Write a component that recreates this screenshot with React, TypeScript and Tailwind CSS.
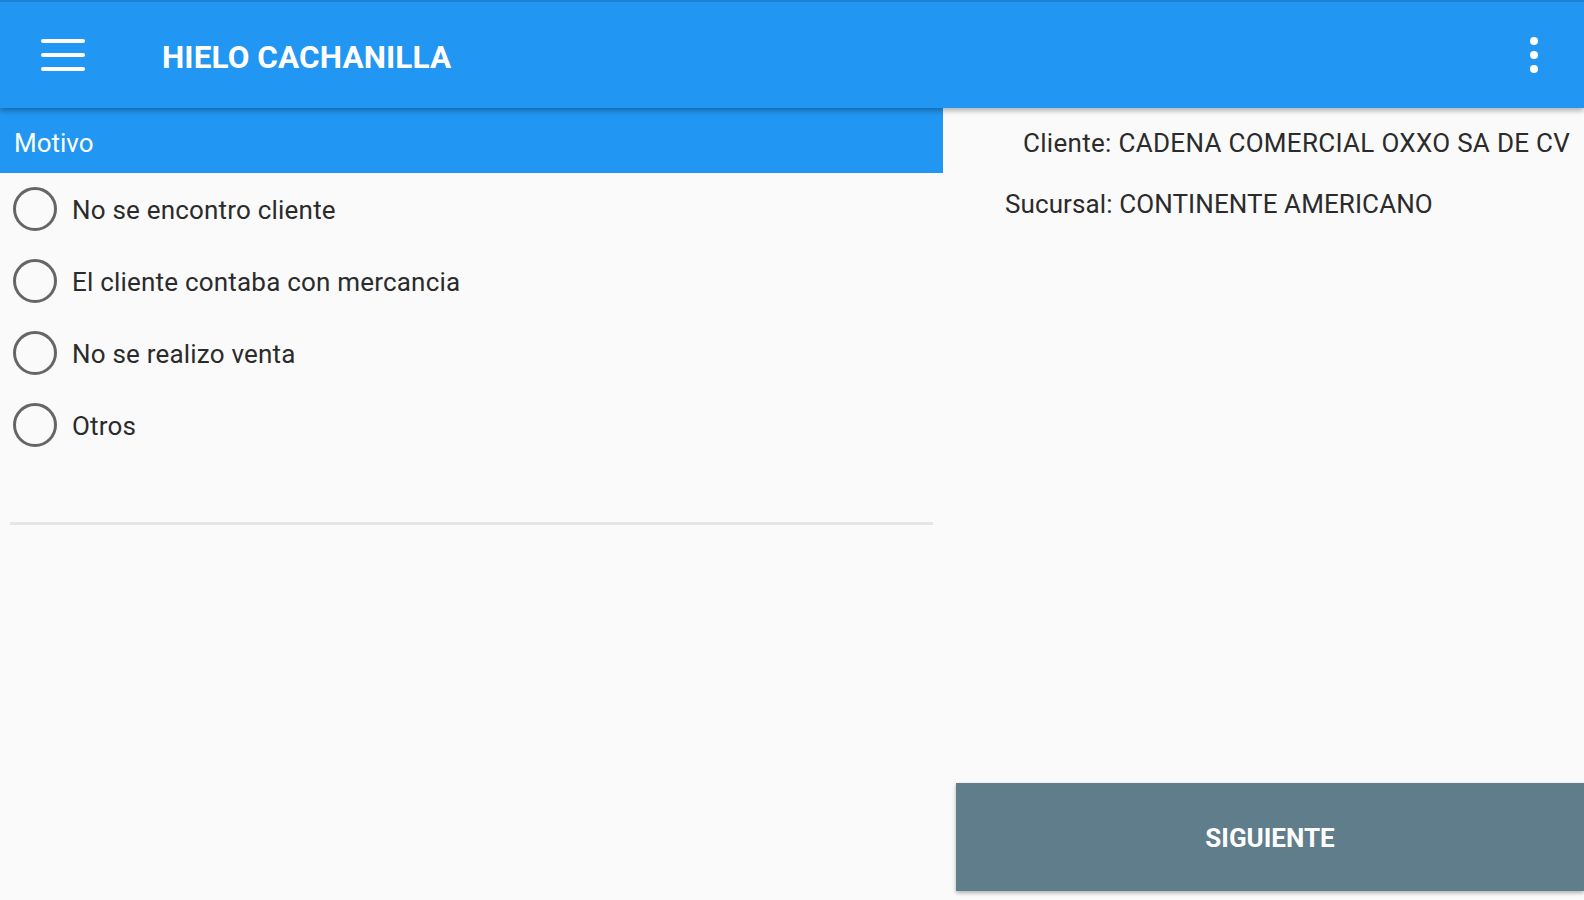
import React, { useState } from 'react'

const motivos = [
  'No se encontro cliente',
  'El cliente contaba con mercancia',
  'No se realizo venta',
  'Otros',
]

export default function App() {
  const [selected, setSelected] = useState<number | null>(null)

  return (
    <div
      className="h-[900px] w-[1584px] overflow-hidden bg-[#fafafa] flex flex-col"
      style={{ fontFamily: 'Roboto, "Noto Sans", sans-serif' }}
    >
      {/* app bar */}
      <header className="relative z-10 h-[108px] shrink-0 border-t-2 border-[#1c82d6] bg-[#2196f3] flex items-center shadow-[0_3px_5px_rgba(0,0,0,0.28)]">
        <button className="ml-[41px] flex h-[32px] w-[44px] flex-col justify-between">
          <span className="block h-[4px] w-full rounded-sm bg-white" />
          <span className="block h-[4px] w-full rounded-sm bg-white" />
          <span className="block h-[4px] w-full rounded-sm bg-white" />
        </button>
        <h1 className="ml-[77px] mt-[5px] text-[31.5px] font-bold tracking-[0.1px] text-white">HIELO CACHANILLA</h1>
        <button className="ml-auto mr-[45px] flex h-[36px] w-[10px] flex-col items-center justify-between">
          <span className="block h-[8px] w-[8px] rounded-full bg-white" />
          <span className="block h-[8px] w-[8px] rounded-full bg-white" />
          <span className="block h-[8px] w-[8px] rounded-full bg-white" />
        </button>
      </header>

      <div className="flex flex-1">
        {/* left column */}
        <section className="w-[943px] shrink-0 flex flex-col">
          <div className="h-[65px] bg-[#2196f3] flex items-center px-[14px]">
            <span className="mt-[6px] text-[26px] text-white">Motivo</span>
          </div>
          <ul>
            {motivos.map((m, i) => (
              <li
                key={m}
                onClick={() => setSelected(i)}
                className="flex h-[72px] cursor-pointer items-center pl-[13px]"
              >
                <span className="flex h-[44px] w-[44px] items-center justify-center rounded-full border-[3px] border-[#666666]">
                  {selected === i && <span className="h-[22px] w-[22px] rounded-full bg-[#2196f3]" />}
                </span>
                <span className="ml-[15px] mt-[3px] text-[26px] tracking-[0.2px] text-[#2b2b2b]">{m}</span>
              </li>
            ))}
          </ul>
          <div className="mx-[10px] mt-[61px] h-[3px] bg-[#e6e6e6]" />
        </section>

        {/* right column */}
        <section className="flex flex-1 flex-col">
          <p className="mt-[19px] pl-[80px] text-[26px] leading-[32px] tracking-[0.3px] text-[#2b2b2b]">
            Cliente: CADENA COMERCIAL OXXO SA DE CV
          </p>
          <p className="mt-[29px] pl-[62px] text-[26px] leading-[32px] tracking-[0.1px] text-[#2b2b2b]">
            Sucursal: CONTINENTE AMERICANO
          </p>
          <button className="mt-auto mb-[9px] ml-[13px] h-[108px] bg-[#607d8b] pt-[2px] text-[26px] font-bold text-white shadow-[0_2px_4px_rgba(0,0,0,0.3)]">
            SIGUIENTE
          </button>
        </section>
      </div>
    </div>
  )
}
